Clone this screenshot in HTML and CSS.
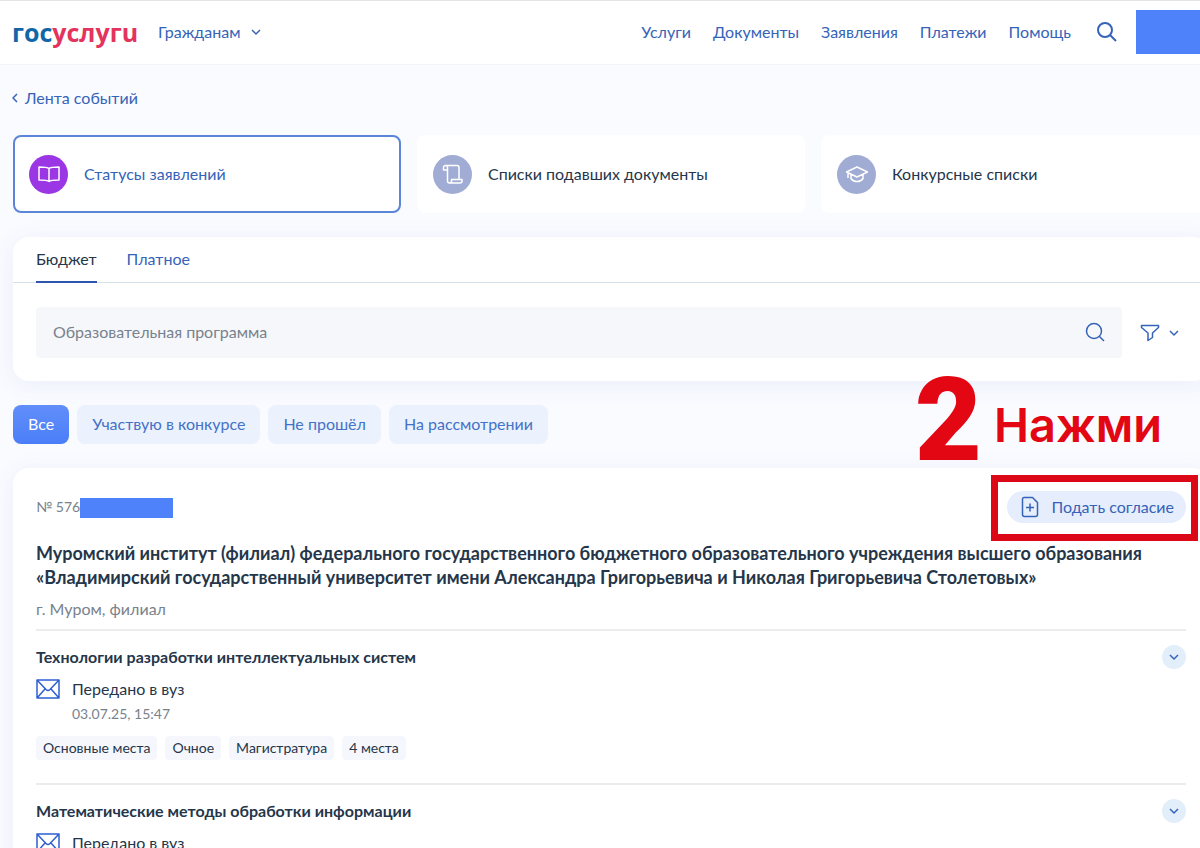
FILE: index.html
```
<!DOCTYPE html>
<html lang="ru">
<head>
  <meta charset="UTF-8" />
  <meta name="viewport" content="width=device-width, initial-scale=1.0" />
  <title>Госуслуги</title>
  <link rel="stylesheet" href="styles.css">
</head>
<body>
<header class="header">
  <a href="#" class="logo" aria-label="Госуслуги"><span class="logo-blue">гос</span><span class="logo-red">услугu</span></a>
  <button class="role">Гражданам
    <svg width="12" height="8" viewBox="0 0 12 8"><path d="M2 2l4 4 4-4"/></svg>
  </button>
  <nav class="nav">
    <a href="#">Услуги</a>
    <a href="#">Документы</a>
    <a href="#">Заявления</a>
    <a href="#">Платежи</a>
    <a href="#">Помощь</a>
  </nav>
  <button class="icon-btn" aria-label="Поиск">
    <svg width="22" height="22" viewBox="0 0 22 22"><circle cx="9" cy="9" r="7"/><path d="M14 14l6 6"/></svg>
  </button>
  <div class="user"></div>
</header>

<main class="page">
  <a href="#" class="back">
    <svg width="8" height="12" viewBox="0 0 8 12"><path d="M6 2L2 6l4 4"/></svg>
    Лента событий
  </a>

  <div class="sections">
    <a href="#" class="section active">
      <span class="circle">
        <svg width="24" height="24" viewBox="0 0 24 24"><path d="M12 6.500C10.500 5 8 5 2 5V18C8 18 10.500 18 12 19.500C13.500 18 16 18 22 18V5C16 5 13.500 5 12 6.500ZM12 6.500V19.500"/></svg>
      </span>
      Статусы заявлений
    </a>
    <a href="#" class="section">
      <span class="circle">
        <svg width="24" height="24" viewBox="0 0 24 24"><path d="M6 8H2.500V5.500A2 2 0 0 1 4.500 3.500H16A2 2 0 0 1 18 5.500V17M4.500 3.500A2 2 0 0 1 6.500 5.500V19A2 2 0 0 0 8.500 21H19A2 2 0 0 0 21 19V17.500H10.500V19A2 2 0 0 1 8.500 21"/></svg>
      </span>
      Списки подавших документы
    </a>
    <a href="#" class="section">
      <span class="circle">
        <svg width="24" height="24" viewBox="0 0 24 24"><path d="M12 5L1.500 10L12 15L22.500 10ZM6 12.500V16.500C8.500 20.500 15.500 20.500 18 16.500V12.500M3 11V16"/></svg>
      </span>
      Конкурсные списки
    </a>
  </div>

  <div class="panel">
    <div class="tabs">
      <button class="tab active">Бюджет</button>
      <button class="tab">Платное</button>
    </div>
    <div class="search-row">
      <div class="search">
        <input type="text" placeholder="Образовательная программа" aria-label="Образовательная программа" />
        <button class="icon-btn" aria-label="Найти">
          <svg width="20" height="20" viewBox="0 0 20 20"><circle cx="9" cy="9" r="7.500"/><path d="M14.500 14.500L19 19"/></svg>
        </button>
      </div>
      <button class="filter" aria-label="Фильтр">
        <svg width="20" height="18" viewBox="0 0 20 18"><path d="M1.500 1.500H18.500V3.500L12.500 9V13.500L8 16.500V9L1.500 3.500Z"/></svg>
        <svg width="12" height="8" viewBox="0 0 12 8"><path d="M2 2l4 4 4-4"/></svg>
      </button>
    </div>
  </div>

  <div class="chips">
    <button class="chip active">Все</button>
    <button class="chip">Участвую в конкурсе</button>
    <button class="chip">Не прошёл</button>
    <button class="chip">На рассмотрении</button>
    <div class="hint"><span class="hint-number">2</span><span class="hint-text">Нажми</span></div>
  </div>

  <article class="card">
    <div class="card-top">
      <div class="number">№ 576<span class="masked"></span></div>
      <div class="consent-wrap">
        <button class="consent">
          <svg width="18" height="22" viewBox="0 0 18 22"><path d="M3 1.500H11.500L16.500 6.500V18.500A2 2 0 0 1 14.500 20.500H3.500A2 2 0 0 1 1.500 18.500V3A1.500 1.500 0 0 1 3 1.500ZM9 7.500V15.500M5 11.500H13"/></svg>
          Подать согласие
        </button>
      </div>
    </div>
    <h2>Муромский институт (филиал) федерального государственного бюджетного образовательного учреждения высшего образования «Владимирский государственный университет имени Александра Григорьевича и Николая Григорьевича Столетовых»</h2>
    <p class="city">г. Муром, филиал</p>

    <section class="program">
      <div class="program-head">
        <h3>Технологии разработки интеллектуальных систем</h3>
        <button class="expand" aria-label="Развернуть"><svg width="12" height="8" viewBox="0 0 12 8"><path d="M2 2l4 4 4-4"/></svg></button>
      </div>
      <div class="status">
        <svg width="24" height="20" viewBox="0 0 24 20"><path d="M1 1H23V19H1ZM1 1L10 10.500Q12 12.500 14 10.500L23 1M1 19L9 10M23 19L15 10"/></svg>
        <div>
          <p>Передано в вуз</p>
          <time>03.07.25, 15:47</time>
        </div>
      </div>
      <ul class="tags">
        <li>Основные места</li>
        <li>Очное</li>
        <li>Магистратура</li>
        <li>4 места</li>
      </ul>
    </section>

    <section class="program">
      <div class="program-head">
        <h3>Математические методы обработки информации</h3>
        <button class="expand" aria-label="Развернуть"><svg width="12" height="8" viewBox="0 0 12 8"><path d="M2 2l4 4 4-4"/></svg></button>
      </div>
      <div class="status">
        <svg width="24" height="20" viewBox="0 0 24 20"><path d="M1 1H23V19H1ZM1 1L10 10.500Q12 12.500 14 10.500L23 1M1 19L9 10M23 19L15 10"/></svg>
        <div>
          <p>Передано в вуз</p>
        </div>
      </div>
    </section>
  </article>
</main>
</body>
</html>
```
FILE: styles.css
```
* {
  box-sizing: border-box;
}
body {
  margin: 0;
  font-family: Lato, "Open Sans", sans-serif;
  font-size: 16px;
  line-height: 24px;
  color: #25364a;
  background: #fafbff;
  overflow: hidden;
}
a {
  color: #3563b8;
  text-decoration: none;
}
button {
  padding: 0;
  border: none;
  background: none;
  font: inherit;
  color: #3563b8;
  cursor: pointer;
}
h2, h3, p, ul {
  margin: 0;
  padding: 0;
}
svg {
  display: block;
  flex: none;
  fill: none;
  stroke: currentColor;
  stroke-width: 2;
  stroke-linejoin: round;
}

/* header */
.header {
  display: flex;
  align-items: center;
  height: 65px;
  padding: 0 0 2px 12px;
  background: #fff;
  border-top: 1px solid #e4e4e8;
  border-bottom: 1px solid #f3f4f8;
}
.logo {
  font-family: "Open Sans", sans-serif;
  font-weight: 700;
  font-size: 25px;
}
.logo-blue {
  color: #1266a8;
}
.logo-red {
  color: #e4335c;
}
.role {
  display: flex;
  align-items: center;
  gap: 10px;
  margin-left: 20px;
}
.role svg, .expand svg {
  stroke-width: 1.5;
}
.nav {
  display: flex;
  gap: 22px;
  margin-left: auto;
}
.header .icon-btn {
  margin: 0 18px 0 25px;
}
.user {
  width: 64px;
  height: 44px;
  background: #4d82fa;
}

/* page runs past the right edge of the window */
.page {
  margin-right: -9px;
  padding: 21px 0 0 13px;
}
.back {
  display: inline-flex;
  align-items: center;
  gap: 6px;
}
.back svg {
  margin-left: -2px;
  stroke-width: 1.5;
}
.sections {
  display: grid;
  grid-template-columns: repeat(3, 1fr);
  gap: 16px;
  margin-top: 25px;
}
.section {
  display: flex;
  align-items: center;
  gap: 16px;
  height: 78px;
  padding: 0 14px;
  border: 2px solid #fff;
  border-radius: 8px;
  background: #fff;
  color: #25364a;
}
.section.active {
  border-color: #5b86d8;
  color: #3563b8;
}
.circle {
  display: flex;
  align-items: center;
  justify-content: center;
  width: 39px;
  height: 39px;
  border-radius: 50%;
  background: #a0acd3;
  color: #fff;
}
.circle svg {
  stroke-width: 1.5;
}
.active .circle {
  background: #9a36e3;
}

/* search panel */
.panel {
  margin-top: 24px;
  border-radius: 16px;
  background: #fff;
  box-shadow: 0 4px 24px rgba(60, 90, 200, 0.08);
}
.tabs {
  display: flex;
  gap: 30px;
  padding: 0 23px;
  border-bottom: 1px solid #d6e2ea;
}
.tab {
  height: 46px;
  margin-bottom: -1px;
  border-bottom: 2px solid transparent;
}
.tab.active {
  border-color: #2c55b0;
  color: #25364a;
}
.search-row {
  display: flex;
  align-items: center;
  gap: 18px;
  padding: 24px 29px 23px 23px;
}
.search {
  display: flex;
  flex: 1;
  align-items: center;
  height: 51px;
  padding: 0 17px 2px;
  border-radius: 4px;
  background: #f6f7fb;
}
.search input {
  flex: 1;
  padding: 0;
  border: none;
  outline: none;
  background: none;
  font: inherit;
}
.search input::placeholder {
  color: #78828c;
  opacity: 1;
}
.search svg, .filter svg {
  stroke-width: 1.5;
}
.filter {
  display: flex;
  align-items: center;
  gap: 8px;
}

.chips {
  position: relative;
  display: flex;
  gap: 8px;
  margin-top: 24px;
}
.chip {
  height: 39px;
  padding: 0 15px 2px;
  border-radius: 8px;
  background: #ebf1fd;
  color: #4472c8;
}
.chip.active {
  background: linear-gradient(#628efa, #4a7ef8);
  color: #fff;
}

/* red callout over the list */
.hint {
  position: absolute;
  right: 47px;
  bottom: -21px;
  display: flex;
  align-items: flex-end;
  gap: 12px;
  color: #e30613;
}
.hint-number {
  font-family: Roboto, sans-serif;
  font-weight: 900;
  font-size: 116px;
  line-height: 90px;
}
.hint-text {
  font-family: Inter, sans-serif;
  font-weight: 600;
  font-size: 47px;
  line-height: 80px;
}

.card {
  margin-top: 24px;
  padding: 23px 23px 40px;
  border-radius: 16px;
  background: #fff;
  box-shadow: 0 4px 24px rgba(60, 90, 200, 0.08);
}
.card-top {
  display: flex;
  align-items: center;
  justify-content: space-between;
}
.number {
  display: flex;
  align-items: center;
  font-size: 14px;
  color: #78828c;
}
.masked {
  width: 93px;
  height: 20px;
  margin-top: 2px;
  background: #4d82fa;
}
.consent-wrap {
  position: relative;
}
.consent-wrap::after {
  content: "";
  position: absolute;
  inset: -16px -12px -18px -16px;
  border: 7px solid #dc0818;
  pointer-events: none;
}
.consent {
  display: flex;
  align-items: center;
  gap: 12px;
  height: 32px;
  padding: 0 12px 0 14px;
  border-radius: 16px;
  background: #e6edfc;
}
.consent svg {
  stroke-width: 1.5;
}
.card h2 {
  margin-top: 18px;
  font-size: 18px;
  line-height: 24px;
}
.city {
  margin: 8px 0;
  color: #78828c;
}
.program {
  padding: 14px 0 23px;
  border-top: 2px solid #ebecee;
}
.program-head {
  display: flex;
  align-items: center;
  justify-content: space-between;
}
.program h3 {
  font-size: 16px;
}
.expand {
  display: flex;
  align-items: center;
  justify-content: center;
  width: 24px;
  height: 24px;
  border-radius: 50%;
  background: #e3eefb;
}
.status {
  display: flex;
  gap: 12px;
  margin-top: 8px;
}
.status svg {
  margin-top: 2px;
  stroke-width: 1.5;
  color: #2f5fd0;
}
.status time {
  display: block;
  font-size: 14px;
  line-height: 26px;
  color: #78828c;
}
.tags {
  display: flex;
  gap: 8px;
  margin-top: 9px;
  list-style: none;
}
.tags li {
  padding: 0 7px;
  border-radius: 4px;
  background: #f5f7fc;
  font-size: 14px;
}
```
